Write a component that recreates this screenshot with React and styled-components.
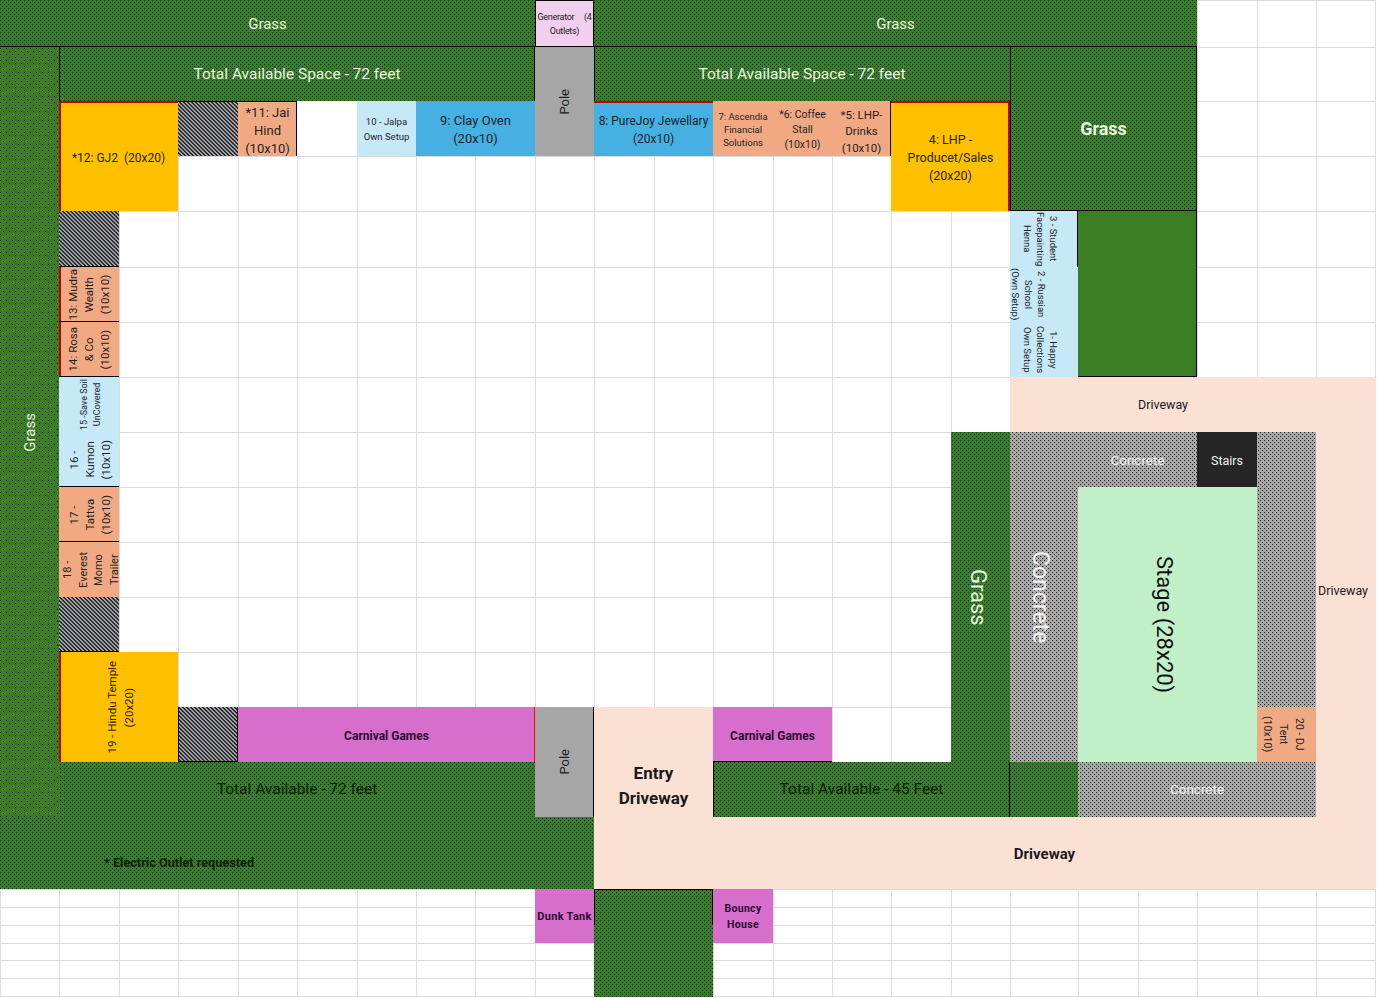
import React from "react";
import styled, { createGlobalStyle } from "styled-components";

const COLS = [59,60,59,60,59,60,59,59,60,59,60,59,60,59,59,60,59,68,60,59,60,59,60];
const ROWS = [47,54,55,55,56,55,55,55,55,55,55,55,55,55,55,72,18,18,18,17,18,19];

const Global = createGlobalStyle`
  html, body { margin: 0; padding: 0; background: #fff; }
  body { font-family: Roboto, "Liberation Sans", sans-serif; color: #1b1b1b; }
`;

const Sheet = styled.div`
  display: grid;
  width: 1376px;
  grid-template-columns: ${COLS.map((w) => `${w}px`).join(" ")};
  grid-template-rows: ${ROWS.map((h) => `${h}px`).join(" ")};
`;

const Cell = styled.div`
  grid-column: ${(p) => p.$c + 1};
  grid-row: ${(p) => p.$r + 1};
  box-sizing: border-box;
  border-left: 1px solid #dcdcdc;
  border-top: 1px solid #dcdcdc;
  ${(p) => p.$lastC && "border-right: 1px solid #dcdcdc;"}
  ${(p) => p.$lastR && "border-bottom: 1px solid #dcdcdc;"}
`;

const edgeShadow = (edges = "", color, w) =>
  edges.split("").map((e) => ({
    t: `inset 0 ${w}px 0 ${color}`,
    b: `inset 0 -${w}px 0 ${color}`,
    l: `inset ${w}px 0 0 ${color}`,
    r: `inset -${w}px 0 0 ${color}`,
  }[e]));

const Area = styled.div`
  grid-column: ${(p) => p.$c[0] + 1} / ${(p) => p.$c[1] + 1};
  grid-row: ${(p) => p.$r[0] + 1} / ${(p) => p.$r[1] + 1};
  display: flex;
  align-items: center;
  justify-content: ${(p) => (p.$start ? "flex-start" : "center")};
  text-align: center;
  box-sizing: border-box;
  min-width: 0;
  overflow: hidden;
  padding: ${(p) => p.$pad || "0"};
  ${(p) => {
    const s = [...edgeShadow(p.$black, "#000", 1), ...edgeShadow(p.$red, "#c00000", 2), ...edgeShadow(p.$hot, "#ff0000", 1)];
    return s.length ? `box-shadow: ${s.join(", ")};` : "";
  }}
`;

const dotTile = (ink, size) => {
  const half = size / 2;
  const svg = `<svg xmlns='http://www.w3.org/2000/svg' width='${size}' height='${size}' shape-rendering='crispEdges'><rect width='1' height='1' fill='${ink}'/><rect x='${half}' y='${half}' width='1' height='1' fill='${ink}'/></svg>`;
  return `url("data:image/svg+xml,${encodeURIComponent(svg)}")`;
};

const Grass = styled(Area)`
  background-color: #3a7d22;
  background-image: ${(p) => dotTile(p.$sparse ? "#04140a" : "#0e3008", p.$sparse ? 6 : 4)};
  background-attachment: fixed;
  color: ${(p) => (p.$ink ? "#0d2208" : "#e9f6e3")};
`;
const Lawn = styled(Area)`
  background: #3a7d22;
`;
const Concrete = styled(Area)`
  background-color: #a8a8a8;
  background-image: ${dotTile("#1a1a1a", 4)};
  background-attachment: fixed;
  color: #f4f4f4;
`;
const Hatch = styled(Area)`
  background: repeating-linear-gradient(45deg, #a0a0a0 0, #a0a0a0 1.7px, #2c2c34 1.7px, #2c2c34 2.83px);
`;
const PoleBox = styled(Area)`
  background: #a6a6a6;
  color: #222;
`;
const Plain = styled(Area)`
  background: #fff;
`;
const Stairs = styled(Area)`
  background: #262626;
  color: #f2f2f2;
`;
const Stage = styled(Area)`
  background: #c1f0c8;
  color: #111;
`;
const Road = styled(Area)`
  background: #fbe0d4;
  color: #1a1a1a;
`;
const Outlet = styled(Area)`
  background: #f2ceef;
  color: #222;
`;
const TONES = { gold: "#ffc000", peach: "#f1a983", sky: "#c6e8f7", blue: "#45b0e1", violet: "#d86ecc" };
const Booth = styled(Area)`
  background: ${(p) => TONES[p.$tone]};
  color: ${(p) => (p.$tone === "violet" ? "#2a0a33" : p.$tone === "gold" ? "#2b2000" : "#1f1f1f")};
`;

const Label = styled.span`
  display: block;
  font-size: ${(p) => p.$size || 13}px;
  line-height: ${(p) => (p.$lh ? `${p.$lh}px` : "1.2")};
  font-weight: ${(p) => (p.$bold ? 700 : 400)};
  letter-spacing: ${(p) => p.$track || 0}px;
  white-space: pre;
`;
const Down = styled(Label)`
  writing-mode: vertical-rl;
`;
const Up = styled(Label)`
  writing-mode: vertical-rl;
  transform: rotate(180deg);
`;

const cells = [];
ROWS.forEach((_, r) =>
  COLS.forEach((_, c) =>
    cells.push(<Cell key={`${c}-${r}`} $c={c} $r={r} $lastC={c === COLS.length - 1} $lastR={r === ROWS.length - 1} />)
  )
);

export default function App() {
  return (
    <>
      <Global />
      <Sheet>
        {cells}

        <Grass $c={[0, 9]} $r={[0, 1]} $black="b"><Label $size={15}>Grass</Label></Grass>
        <Outlet $c={[9, 10]} $r={[0, 1]} $black="tlrb"><Label $size={9} $lh={14} $track={-0.3}>{"Generator     (4\nOutlets)"}</Label></Outlet>
        <Grass $c={[10, 20]} $r={[0, 1]} $black="b"><Label $size={15}>Grass</Label></Grass>

        <Grass $sparse $c={[0, 1]} $r={[1, 15]}><Up $size={15}>Grass</Up></Grass>
        <Grass $c={[1, 9]} $r={[1, 2]} $black="lr"><Label $size={15.5}>Total Available Space - 72 feet</Label></Grass>
        <PoleBox $c={[9, 10]} $r={[1, 3]}><Up $size={13}>Pole</Up></PoleBox>
        <Grass $c={[10, 17]} $r={[1, 2]} $black="l"><Label $size={15.5}>Total Available Space - 72 feet</Label></Grass>
        <Grass $c={[17, 20]} $r={[1, 4]} $black="lrb"><Label $size={18} $bold>Grass</Label></Grass>

        <Booth $tone="gold" $c={[1, 3]} $r={[2, 4]} $red="tl" $pad="4px 0 0"><Label $size={12}>{"*12: GJ2  (20x20)"}</Label></Booth>
        <Hatch $c={[3, 4]} $r={[2, 3]} $black="t" />
        <Booth $tone="peach" $c={[4, 5]} $r={[2, 3]} $black="tr" $pad="4px 0 0"><Label $size={13} $lh={18}>{"*11: Jai\nHind\n(10x10)"}</Label></Booth>
        <Plain $c={[5, 6]} $r={[2, 3]} />
        <Booth $tone="sky" $c={[6, 7]} $r={[2, 3]} $pad="1px 0 0"><Label $size={9.5} $lh={15}>{"10 - Jalpa\nOwn Setup"}</Label></Booth>
        <Booth $tone="blue" $c={[7, 9]} $r={[2, 3]} $pad="2px 0 0"><Label $size={13} $lh={18}>{"9: Clay Oven\n(20x10)"}</Label></Booth>
        <Booth $tone="blue" $c={[10, 12]} $r={[2, 3]} $red="t" $pad="2px 0 0"><Label $size={12} $lh={18}>{"8: PureJoy Jewellary\n(20x10)"}</Label></Booth>
        <Booth $tone="peach" $c={[12, 13]} $r={[2, 3]} $pad="2px 0 0"><Label $size={9.5} $lh={13}>{"7: Ascendia\nFinancial\nSolutions"}</Label></Booth>
        <Booth $tone="peach" $c={[13, 14]} $r={[2, 3]} $pad="2px 0 0"><Label $size={10.5} $lh={15}>{"*6: Coffee\nStall\n(10x10)"}</Label></Booth>
        <Booth $tone="peach" $c={[14, 15]} $r={[2, 3]} $black="r" $pad="6px 0 0"><Label $size={11.5} $lh={16.5}>{"*5: LHP-\nDrinks\n(10x10)"}</Label></Booth>
        <Booth $tone="gold" $c={[15, 17]} $r={[2, 4]} $red="tr" $pad="4px 0 0"><Label $size={12.5} $lh={18}>{"4: LHP -\nProducet/Sales\n(20x20)"}</Label></Booth>

        <Hatch $c={[1, 2]} $r={[4, 5]} $black="b" />
        <Booth $tone="peach" $c={[1, 2]} $r={[5, 6]} $red="l" $black="b"><Up $size={11.5} $lh={16}>{"13: Mudra\nWealth\n(10x10)"}</Up></Booth>
        <Booth $tone="peach" $c={[1, 2]} $r={[6, 7]} $red="l" $black="b"><Up $size={11.5} $lh={16}>{"14: Rosa\n& Co\n(10x10)"}</Up></Booth>
        <Booth $tone="sky" $c={[1, 2]} $r={[7, 8]} $pad="0 0 0 3px"><Up $size={9} $lh={13}>{"15 -Save Soil\nUnCovered"}</Up></Booth>
        <Booth $tone="sky" $c={[1, 2]} $r={[8, 9]} $black="b" $pad="0 0 0 2px"><Up $size={11.5} $lh={16}>{"16 -\nKumon\n(10x10)"}</Up></Booth>
        <Booth $tone="peach" $c={[1, 2]} $r={[9, 10]} $black="b" $pad="0 0 0 2px"><Up $size={11.5} $lh={16}>{"17 -\nTattva\n(10x10)"}</Up></Booth>
        <Booth $tone="peach" $c={[1, 2]} $r={[10, 11]} $pad="0 0 0 3px"><Up $size={11} $lh={15.5}>{"18 -\nEverest\nMomo\nTrailer"}</Up></Booth>
        <Hatch $c={[1, 2]} $r={[11, 12]} $black="b" />
        <Booth $tone="gold" $c={[1, 3]} $r={[12, 14]} $red="l" $pad="0 0 0 4px"><Up $size={11.5} $lh={17}>{"19 - Hindu Temple\n(20x20)"}</Up></Booth>
        <Hatch $c={[3, 4]} $r={[13, 14]} $black="lrb" />
        <Booth $tone="violet" $c={[4, 9]} $r={[13, 14]} $hot="r" $pad="4px 0 0"><Label $size={12} $bold>Carnival Games</Label></Booth>
        <PoleBox $c={[9, 10]} $r={[13, 15]} $black="r"><Up $size={13}>Pole</Up></PoleBox>
        <Road $c={[10, 12]} $r={[13, 16]} $pad="0 0 24px"><Label $size={17} $lh={25} $bold>{"Entry\nDriveway"}</Label></Road>
        <Booth $tone="violet" $c={[12, 14]} $r={[13, 14]} $black="b" $pad="3px 0 0"><Label $size={12} $bold>Carnival Games</Label></Booth>

        <Grass $ink $c={[1, 9]} $r={[14, 15]}><Label $size={15.5}>Total Available - 72 feet</Label></Grass>
        <Grass $ink $c={[12, 17]} $r={[14, 15]} $black="lr"><Label $size={15.5}>Total Available - 45 Feet</Label></Grass>
        <Grass $c={[17, 18]} $r={[14, 15]} />
        <Concrete $c={[18, 22]} $r={[14, 15]}><Label $size={13.5}>Concrete</Label></Concrete>

        <Grass $ink $start $c={[0, 10]} $r={[15, 16]} $pad="20px 0 0 104px">
          <Label $size={12.7} $bold>* Electric Outlet requested</Label>
        </Grass>
        <Road $c={[12, 23]} $r={[15, 16]} $pad="1px 0 0"><Label $size={15} $bold>Driveway</Label></Road>

        <Grass $c={[16, 17]} $r={[8, 14]} $pad="0 6px 0 0"><Down $size={22}>Grass</Down></Grass>
        <Concrete $c={[17, 18]} $r={[8, 14]} $pad="0 8px 0 0"><Down $size={23}>Concrete</Down></Concrete>
        <Concrete $c={[18, 20]} $r={[8, 9]} $pad="2px 0 0"><Label $size={13.5}>Concrete</Label></Concrete>
        <Stairs $c={[20, 21]} $r={[8, 9]} $pad="2px 0 0"><Label $size={12.5}>Stairs</Label></Stairs>
        <Concrete $c={[21, 22]} $r={[8, 13]} />
        <Stage $c={[18, 21]} $r={[9, 14]} $pad="0 8px 0 0"><Down $size={22}>Stage (28x20)</Down></Stage>
        <Booth $tone="peach" $c={[21, 22]} $r={[13, 14]} $pad="0 7px 0 0"><Down $size={10.5} $lh={16}>{"20 - DJ\nTent\n(10x10)"}</Down></Booth>

        <Booth $tone="sky" $c={[17, 18]} $r={[4, 5]} $pad="0 7px 0 0" $black="r"><Down $size={9.5} $lh={13}>{"3 - Student\nFacepainting\nHenna"}</Down></Booth>
        <Booth $tone="sky" $c={[17, 18]} $r={[5, 6]} $pad="0 32px 0 0"><Down $size={9.5} $lh={13}>{"2 - Russian\nSchool\n(Own Setup)"}</Down></Booth>
        <Booth $tone="sky" $c={[17, 18]} $r={[6, 7]} $pad="0 7px 0 0"><Down $size={9.5} $lh={13}>{"1- Happy\nCollections\nOwn Setup"}</Down></Booth>
        <Lawn $c={[18, 20]} $r={[4, 7]} $black="rb" />
        <Road $c={[17, 22]} $r={[7, 8]}><Label $size={12.5}>Driveway</Label></Road>
        <Road $c={[22, 23]} $r={[7, 15]} $pad="0 6px 14px 0"><Label $size={12.5}>Driveway</Label></Road>

        <Booth $tone="violet" $c={[9, 10]} $r={[16, 19]} $pad="2px 0 0"><Label $size={11} $bold $track={0.3}>Dunk Tank</Label></Booth>
        <Grass $c={[10, 12]} $r={[16, 18]} $black="tlr" />
        <Grass $c={[10, 12]} $r={[18, 22]} />
        <Booth $tone="violet" $c={[12, 13]} $r={[16, 19]} $pad="2px 0 0"><Label $size={10.5} $lh={16} $bold $track={0.3}>{"Bouncy\nHouse"}</Label></Booth>
      </Sheet>
    </>
  );
}
